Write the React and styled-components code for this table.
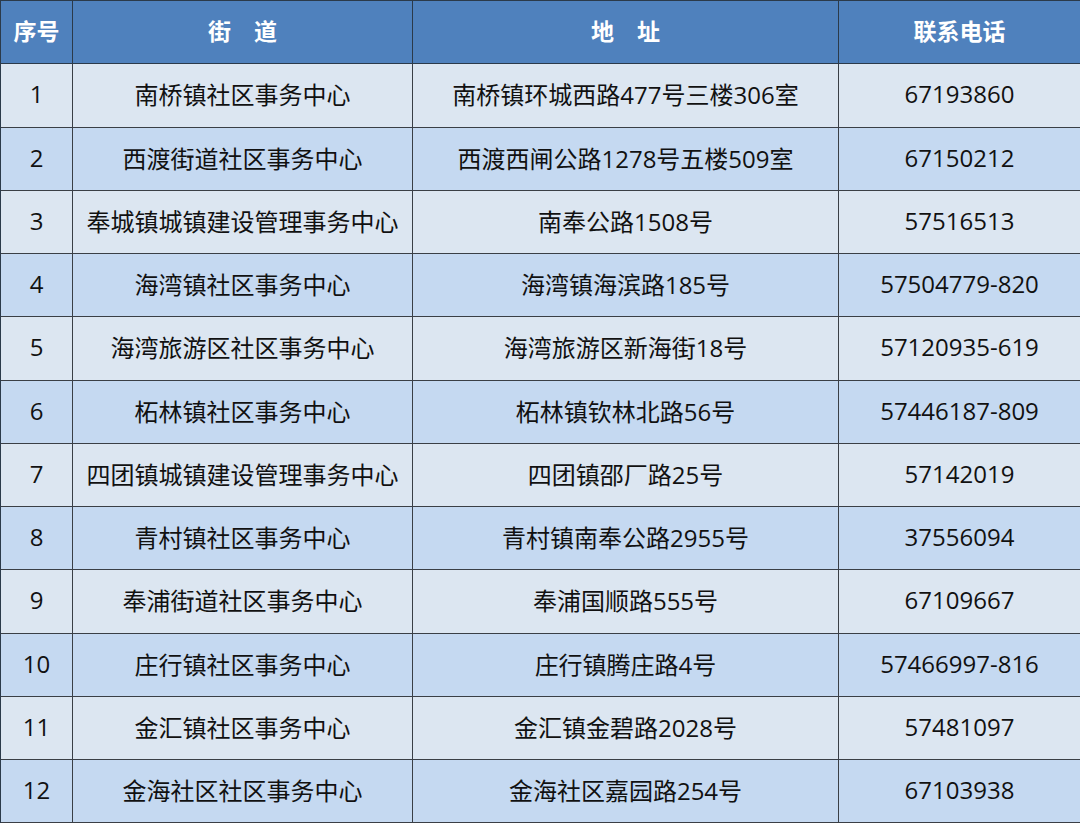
import React from 'react'
import styled, { createGlobalStyle } from 'styled-components'

const GlobalStyle = createGlobalStyle`
    html, body {
        margin: 0;
        padding: 0;
        background: #ffffff;
    }
    body {
        font-family: "Open Sans", "Noto Sans CJK SC", sans-serif;
    }
`

const rows = [
    ['1', '南桥镇社区事务中心', '南桥镇环城西路477号三楼306室', '67193860'],
    ['2', '西渡街道社区事务中心', '西渡西闸公路1278号五楼509室', '67150212'],
    ['3', '奉城镇城镇建设管理事务中心', '南奉公路1508号', '57516513'],
    ['4', '海湾镇社区事务中心', '海湾镇海滨路185号', '57504779-820'],
    ['5', '海湾旅游区社区事务中心', '海湾旅游区新海街18号', '57120935-619'],
    ['6', '柘林镇社区事务中心', '柘林镇钦林北路56号', '57446187-809'],
    ['7', '四团镇城镇建设管理事务中心', '四团镇邵厂路25号', '57142019'],
    ['8', '青村镇社区事务中心', '青村镇南奉公路2955号', '37556094'],
    ['9', '奉浦街道社区事务中心', '奉浦国顺路555号', '67109667'],
    ['10', '庄行镇社区事务中心', '庄行镇腾庄路4号', '57466997-816'],
    ['11', '金汇镇社区事务中心', '金汇镇金碧路2028号', '57481097'],
    ['12', '金海社区社区事务中心', '金海社区嘉园路254号', '67103938'],
]

const headers = ['序号', '街　道', '地　址', '联系电话']

export default function App() {
    return (
        <>
            <GlobalStyle />
            <Table>
                {headers.map((h, i) => (
                    <HeadCell key={'h' + i}>{h}</HeadCell>
                ))}
                {rows.map((r, ri) =>
                    r.map((c, ci) => (
                        <Cell key={ri + '-' + ci} $even={ri % 2 === 1}>
                            {c}
                        </Cell>
                    ))
                )}
            </Table>
        </>
    )
}

const Table = styled.div`
    display: grid;
    grid-template-columns: 72px 340px 426px 242px;
    grid-auto-rows: 63.25px;
    width: 1080px;
    box-sizing: border-box;
    border-top: 1px solid #2b3a4a;
    border-left: 1px solid #2b3a4a;
`

const CellBase = styled.div`
    display: flex;
    align-items: center;
    justify-content: center;
    box-sizing: border-box;
    border-right: 1px solid #3a3f46;
    border-bottom: 1px solid #3a3f46;
    white-space: nowrap;
    font-family: "Open Sans", "Noto Sans CJK SC", sans-serif;
`

const HeadCell = styled(CellBase)`
    background: #4f81bd;
    color: #ffffff;
    font-size: 23px;
    font-weight: 700;
    padding-bottom: 4px;
    border-bottom-color: #2b3a4a;
    border-right-color: #2b3a4a;
`

const Cell = styled(CellBase)`
    background: ${p => (p.$even ? '#c5d9f1' : '#dce6f1')};
    color: #111111;
    font-size: 24px;
    padding-bottom: 3px;
`
